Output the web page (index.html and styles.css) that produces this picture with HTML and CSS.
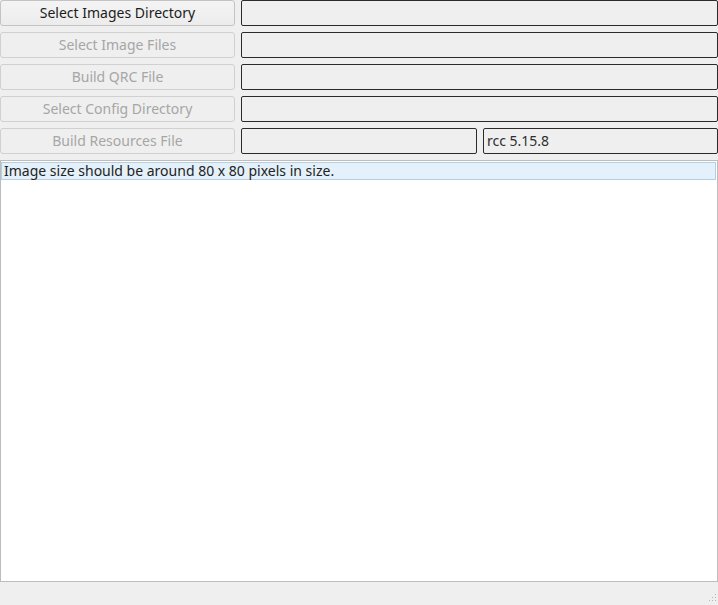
FILE: index.html
```html
<!DOCTYPE html>
<html>
<head>
<meta charset="utf-8">
<link rel="stylesheet" href="styles.css">
</head>
<body>
<div class="window">
  <div class="form">
    <div class="row">
      <button class="btn">Select Images Directory</button>
      <div class="field"></div>
    </div>
    <div class="row">
      <button class="btn" disabled>Select Image Files</button>
      <div class="field"></div>
    </div>
    <div class="row">
      <button class="btn" disabled>Build QRC File</button>
      <div class="field"></div>
    </div>
    <div class="row">
      <button class="btn" disabled>Select Config Directory</button>
      <div class="field"></div>
    </div>
    <div class="row">
      <button class="btn" disabled>Build Resources File</button>
      <div class="split">
        <div class="field"></div>
        <div class="field">rcc 5.15.8</div>
      </div>
    </div>
  </div>
  <div class="list">
    <div class="item current">Image size should be around 80 x 80 pixels in size.</div>
  </div>
  <div class="status">
    <svg class="grip" width="10" height="10" viewBox="0 0 10 10">
      <rect x="8" y="0" width="1" height="1" fill="#b5b5b5"/>
      <rect x="5" y="3" width="1" height="1" fill="#b5b5b5"/>
      <rect x="8" y="3" width="1" height="1" fill="#b5b5b5"/>
      <rect x="2" y="6" width="1" height="1" fill="#b5b5b5"/>
      <rect x="5" y="6" width="1" height="1" fill="#b5b5b5"/>
      <rect x="8" y="6" width="1" height="1" fill="#b5b5b5"/>
    </svg>
  </div>
</div>
</body>
</html>
```
FILE: styles.css
```css
html, body {
  margin: 0;
  padding: 0;
  background: #efefef;
}
.window {
  width: 718px;
  height: 605px;
  display: flex;
  flex-direction: column;
  font-family: "Noto Sans", sans-serif;
  font-size: 14px;
  color: #232323;
}
.form {
  display: flex;
  flex-direction: column;
  gap: 6px;
}
.row {
  display: grid;
  grid-template-columns: 235px 1fr;
  gap: 6px;
  height: 26px;
}
.btn {
  margin: 0;
  padding: 0 0 2px 0;
  font: inherit;
  color: #1c1c1c;
  background: linear-gradient(#f4f4f4, #ececec);
  border: 1px solid #c3c3c3;
  border-radius: 3px;
  height: 26px;
}
.btn:disabled {
  color: #a6a6a6;
  border-color: #d0d0d0;
  background: #efefef;
}
.split {
  display: grid;
  grid-template-columns: 236px 1fr;
  gap: 6px;
}
.field {
  box-sizing: border-box;
  height: 26px;
  border: 1px solid #2b2b2b;
  border-radius: 2px;
  background: #efefef;
  padding: 0 3px;
  line-height: 24px;
  color: #2e2e2e;
}
.list {
  margin-top: 6px;
  flex: 1;
  background: #ffffff;
  border: 1px solid #bdbdbd;
  padding: 1px 1px 1px 0;
}
.item {
  box-sizing: border-box;
  height: 18px;
  line-height: 15px;
  padding: 0 2px;
  color: #232323;
}
.item.current {
  background: #e4f1fa;
  border: 1px solid #b4cfe3;
}
.status {
  height: 23px;
  flex: none;
  display: flex;
  justify-content: flex-end;
  align-items: flex-end;
}
.grip {
  margin: 0 1px 1px 0;
}
```
